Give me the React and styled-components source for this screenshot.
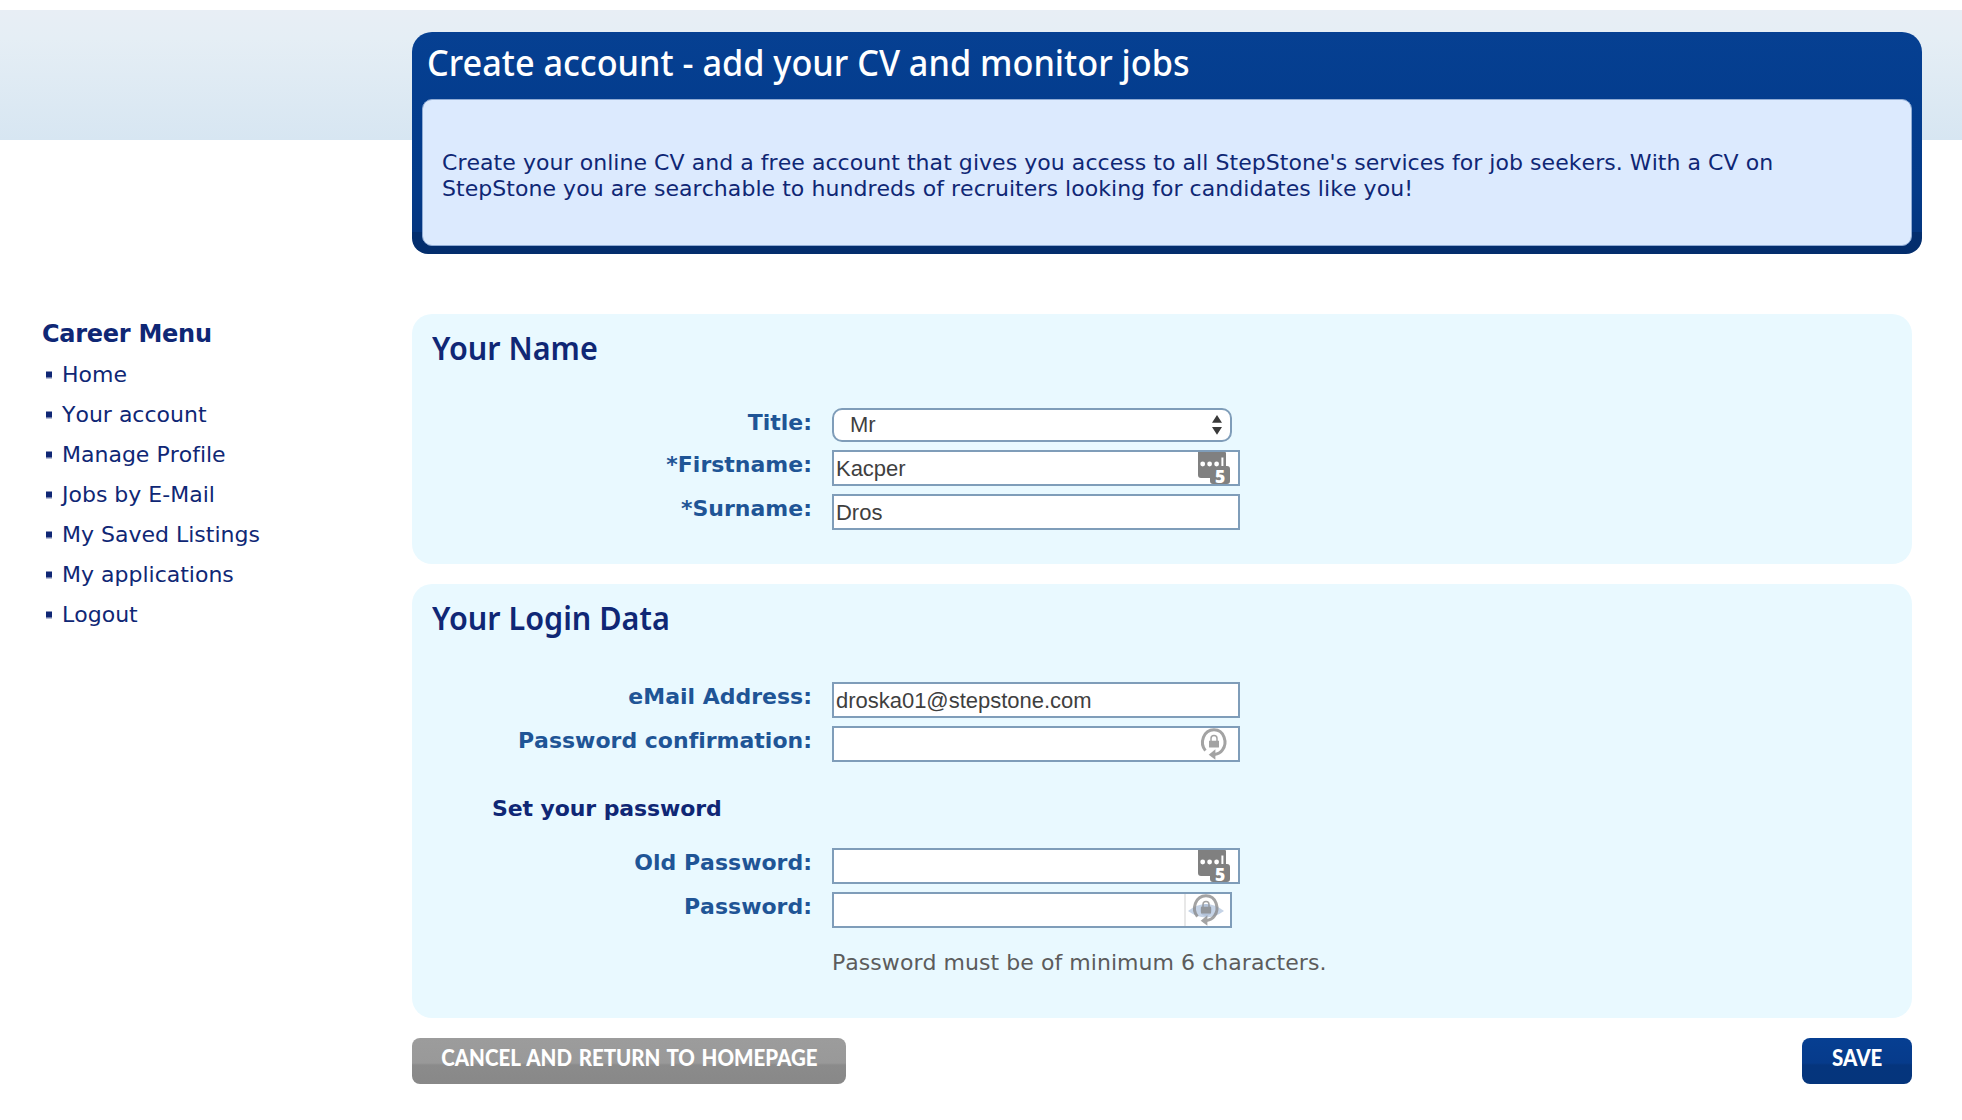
import React from "react";
import styled, { createGlobalStyle } from "styled-components";

const SANS = `"DejaVu Sans", Verdana, sans-serif`;
const HEADING = `"Noto Sans", "Trebuchet MS", sans-serif`;
const FIELD = `"Liberation Sans", Arial, sans-serif`;
const NAVY = "#0f2775";

const GlobalStyle = createGlobalStyle`
  *, *::before, *::after { box-sizing: border-box; }
  body {
    margin: 0;
    background: #fff;
    font-family: ${SANS};
    font-size: 22px;
    font-variant-ligatures: none;
    font-kerning: none;
    color: ${NAVY};
  }
`;

const Page = styled.div`
  width: 1962px;
  height: 1120px;
  padding-top: 32px;
  overflow: hidden;
  background: #fff linear-gradient(#e8eef5 0, #e5eef5 22%, #d7e6f2 100%) 0 10px / 100% 130px no-repeat;
`;

const Hero = styled.header`
  display: flex;
  flex-direction: column;
  width: 1510px;
  height: 222px;
  margin-left: 412px;
  padding: 0 10px 8px;
  border-radius: 20px 20px 16px 16px;
  background: linear-gradient(#064092 0, #033c8d 90px, #043a88 160px, #043680 200px, #032e6f 200px, #032d6c 100%);
`;

const HeroTitle = styled.h1`
  margin: 0 0 5px 5px;
  font: 500 36px/62px ${HEADING};
  transform: scaleX(0.951);
  transform-origin: left;
  font-kerning: auto;
  color: #fff;
`;

const HeroText = styled.p`
  flex: 1;
  margin: 0;
  padding: 50px 100px 0 19px;
  border: 1px solid #8fabd4;
  border-radius: 10px;
  background: #dceafe;
  line-height: 26px;
  letter-spacing: 0.05px;
`;

const Body = styled.div`
  display: grid;
  grid-template-columns: 412px 1500px;
  margin-top: 60px;
`;

const Sidebar = styled.nav`
  padding: 6px 0 0 42px;
`;

const MenuTitle = styled.h2`
  margin: 0 0 7px;
  font-size: 24px;
  line-height: 28px;
  letter-spacing: -0.27px;
`;

const Menu = styled.ul`
  margin: 0;
  padding: 0;
  list-style: none;
`;

const MenuItem = styled.li`
  display: flex;
  align-items: center;
  gap: 10px;
  padding-left: 4px;
  line-height: 40px;

  &::before {
    content: "";
    width: 6px;
    height: 8px;
    margin-top: -1px;
    background: linear-gradient(#8792ba 0 1px, ${NAVY} 1px 6px, #6b79a8 6px 7px, #b7bed6 7px);
  }
`;

const Main = styled.main`
  display: flex;
  flex-direction: column;
  gap: 20px;
`;

const Panel = styled.section`
  height: ${(p) => p.$height};
  padding-top: 14px;
  border-radius: 20px;
  background: #e9f9ff;
`;

const PanelTitle = styled.h2`
  margin: 0 0 ${(p) => p.$gap} 20px;
  font: 600 32px/40px ${HEADING};
  transform: scaleX(0.955);
  transform-origin: left;
  font-kerning: auto;
`;

const Rows = styled.div`
  display: flex;
  flex-direction: column;
  gap: 8px;
`;

const Row = styled.div`
  display: grid;
  grid-template-columns: 400px auto;
  column-gap: 20px;
  justify-content: start;
`;

const Label = styled.label`
  padding-top: 1px;
  text-align: right;
  font-weight: bold;
  line-height: 28px;
  color: #1f5596;
`;

const SubHeading = styled.h3`
  margin: 33px 0 25px 80px;
  font-size: 22px;
  line-height: 28px;
  letter-spacing: -0.1px;
`;

const Field = styled.div`
  display: flex;
  width: ${(p) => p.$width || "408px"};
  height: 36px;
  padding-left: 2px;
  border: 2px solid #7f9db9;
  background: #fff;
  font: 22px/33px ${FIELD};
  font-kerning: auto;
  letter-spacing: -0.02px;
  color: #3f3f3f;

  svg { display: block; margin-left: auto; overflow: visible; }
`;

const Select = styled(Field)`
  width: 400px;
  height: 34px;
  padding-left: 16px;
  border-radius: 10px;
  line-height: 29px;
`;

const Divider = styled.span`
  width: 2px;
  margin-left: auto;
  background: #e8e8e8;

  & + svg { margin-left: 0; }
`;

const Note = styled.p`
  margin: 21px 0 0 420px;
  line-height: 28px;
  letter-spacing: 0.05px;
  color: #5c5c5c;
`;

const Actions = styled.div`
  display: flex;
  justify-content: space-between;
`;

const Button = styled.button`
  display: flex;
  justify-content: center;
  width: ${(p) => p.$width};
  height: 46px;
  padding: 0;
  border: 0;
  border-radius: 8px;
  background: ${(p) => p.$primary
    ? "linear-gradient(#063f92 0, #063b8b 25px, #05357d 27px, #05357c 100%)"
    : "linear-gradient(#9c9c9c 0, #999 25px, #8b8b8b 27px, #888 100%)"};
  font: 900 23px/39px Lato, "Trebuchet MS", sans-serif;
  word-spacing: 2px;
  color: #fff;
`;

const ButtonText = styled.span`
  white-space: nowrap;
  transform: scaleX(0.89);
`;

const SelectArrows = () => (
  <svg width="18" height="30" viewBox="0 0 18 30" fill="#3a3a3a">
    <path d="M0 12.7L5 5l5 7.7zM0 17h10l-5 7.7z" />
  </svg>
);

const PasswordManagerIcon = () => (
  <svg width="40" height="32" viewBox="0 0 40 32">
    <path d="M0 0h27q1 0 1 1v13h1q3 0 3 3v12q0 3-3 3H15q-3 0-3-3v-3H3q-3 0-3-3z" fill="#808080" />
    <g fill="#fff">
      <circle cx="4.7" cy="12" r="2.4" />
      <circle cx="11.6" cy="12" r="2.4" />
      <circle cx="18.6" cy="12" r="2.4" />
      <path d="M23.4 5.5h2v8.5h-2z" />
      <text x="17" y="30.5" fontFamily="Open Sans, sans-serif" fontWeight="800" fontSize="17.5">5</text>
    </g>
  </svg>
);

const GeneratorIcon = ({ withEye }) => (
  <svg width={withEye ? 44 : 45} height="32" viewBox={withEye ? "1 0 44 32" : "0 0 45 32"}>
    {withEye && (
      <>
        <path d="M3 17Q21 3 39 17Q21 30 3 17z" fill="#c5d3e6" />
        <circle cx="21" cy="16" r="6" fill="#b3c3da" />
      </>
    )}
    <g opacity=".78">
      <path
        d="M12.4 22.6C6.2 15 10.5 1.7 21 1.7S34.6 15 29.5 21.8Q26.8 25.6 21.5 26.4"
        fill="none" stroke="#8a8a8a" strokeWidth="3"
      />
      <path d="M15.7 26.8L22.4 21.3V31.7z" fill="#8a8a8a" />
      <path d="M16 12.7h10V19q0 .6-.6.6h-8.8q-.6 0-.6-.6z" fill="#8a8a8a" />
      <path d="M18 13.5V10.5a3 3 0 0 1 6 0v3" fill="none" stroke="#8a8a8a" strokeWidth="1.5" />
    </g>
  </svg>
);

const MENU = ["Home", "Your account", "Manage Profile", "Jobs by E-Mail", "My Saved Listings", "My applications", "Logout"];

export default function App() {
  return (
    <>
      <GlobalStyle />
      <Page>
        <Hero>
          <HeroTitle>Create account - add your CV and monitor jobs</HeroTitle>
          <HeroText>
            Create your online CV and a free account that gives you access to all StepStone's services for job seekers. With a CV on
            <br />
            StepStone you are searchable to hundreds of recruiters looking for candidates like you!
          </HeroText>
        </Hero>
        <Body>
          <Sidebar>
            <MenuTitle>Career Menu</MenuTitle>
            <Menu>
              {MENU.map((item) => <MenuItem key={item}>{item}</MenuItem>)}
            </Menu>
          </Sidebar>
          <Main>
            <Panel $height="250px">
              <PanelTitle $gap="40px">Your Name</PanelTitle>
              <Rows>
                <Row><Label>Title:</Label><Select>Mr<SelectArrows /></Select></Row>
                <Row><Label>*Firstname:</Label><Field>Kacper<PasswordManagerIcon /></Field></Row>
                <Row><Label>*Surname:</Label><Field>Dros</Field></Row>
              </Rows>
            </Panel>
            <Panel $height="434px">
              <PanelTitle $gap="44px">Your Login Data</PanelTitle>
              <Rows>
                <Row><Label>eMail Address:</Label><Field>droska01@stepstone.com</Field></Row>
                <Row><Label>Password confirmation:</Label><Field><GeneratorIcon /></Field></Row>
              </Rows>
              <SubHeading>Set your password</SubHeading>
              <Rows>
                <Row><Label>Old Password:</Label><Field><PasswordManagerIcon /></Field></Row>
                <Row><Label>Password:</Label><Field $width="400px"><Divider /><GeneratorIcon withEye /></Field></Row>
              </Rows>
              <Note>Password must be of minimum 6 characters.</Note>
            </Panel>
            <Actions>
              <Button $width="434px"><ButtonText>CANCEL AND RETURN TO HOMEPAGE</ButtonText></Button>
              <Button $width="110px" $primary><ButtonText>SAVE</ButtonText></Button>
            </Actions>
          </Main>
        </Body>
      </Page>
    </>
  );
}
